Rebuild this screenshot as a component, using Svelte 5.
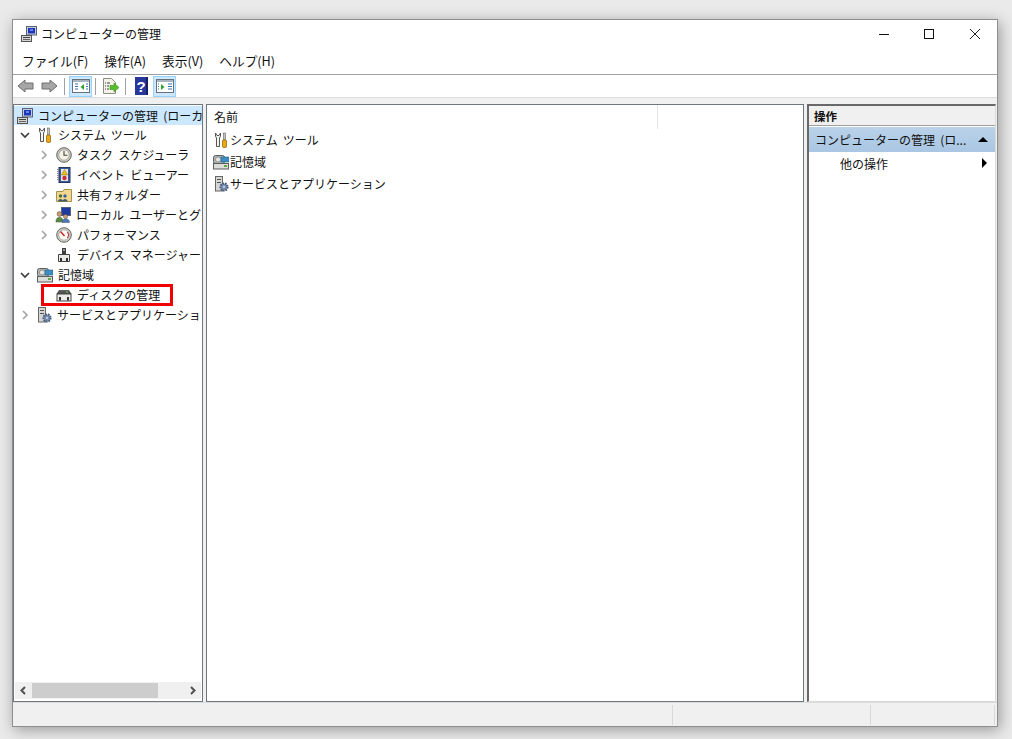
<script>
  const menus = ['ファイル(F)', '操作(A)', '表示(V)', 'ヘルプ(H)'];
  const tree = [
    { label: 'システム ツール', icon: 'tools', depth: 1, arrow: 'down' },
    { label: 'タスク スケジューラ', icon: 'clock', depth: 2, arrow: 'right' },
    { label: 'イベント ビューアー', icon: 'event', depth: 2, arrow: 'right' },
    { label: '共有フォルダー', icon: 'folder', depth: 2, arrow: 'right' },
    { label: 'ローカル ユーザーとグループ', icon: 'users', depth: 2, arrow: 'right' },
    { label: 'パフォーマンス', icon: 'perf', depth: 2, arrow: 'right' },
    { label: 'デバイス マネージャー', icon: 'device', depth: 2, arrow: '' },
    { label: '記憶域', icon: 'storage', depth: 1, arrow: 'down' },
    { label: 'ディスクの管理', icon: 'disk', depth: 2, arrow: '', marked: true },
    { label: 'サービスとアプリケーション', icon: 'services', depth: 1, arrow: 'right' }
  ];
  const list = [
    { label: 'システム ツール', icon: 'tools' },
    { label: '記憶域', icon: 'storage' },
    { label: 'サービスとアプリケーション', icon: 'services' }
  ];
</script>

{#snippet icon(name)}
  <svg class="ico" width="16" height="16" viewBox="0 0 16 16">
    {#if name === 'computer'}
      <rect x="5.500" y=".5" width="10" height="8.500" fill="#c8ccd8" stroke="#56617e"/>
      <rect x="7" y="2" width="7" height="5.500" fill="#1f35b8"/>
      <rect x="9" y="3" width="3" height="2" fill="#5f86ea"/>
      <rect x=".5" y="9.500" width="10" height="6" fill="#d3d3cf" stroke="#555"/>
      <rect x="2" y="11" width="7" height="1" fill="#444"/>
      <rect x="2" y="13" width="7" height="1" fill="#666"/>
    {:else if name === 'tools'}
      <path d="M2.500 1v3.200L3.500 6v8.500h3V6l1-1.800V1L6 3.500H4z" fill="#f4f4f0" stroke="#555"/>
      <rect x="10.500" y="1" width="2" height="7" fill="#c4c4bc" stroke="#666" stroke-width=".6"/>
      <rect x="9.500" y="8" width="4" height="7.500" rx="1" fill="#eca80e" stroke="#8a5a08" stroke-width=".7"/>
    {:else if name === 'clock'}
      <circle cx="8" cy="8" r="7.300" fill="#c9c9c2" stroke="#66665f"/>
      <circle cx="8" cy="8" r="5.200" fill="#f6f3e6" stroke="#8f8f88" stroke-width=".6"/>
      <path d="M8 4v4.300h3.400" fill="none" stroke="#44443c" stroke-width="1.100"/>
    {:else if name === 'event'}
      <rect x="3" y=".5" width="11" height="15" fill="#3a5a9c" stroke="#26375f"/>
      <path d="M2 2v12" stroke="#8a8a8a" stroke-width="2" stroke-dasharray="1 1"/>
      <rect x="5" y="2" width="7" height="12" fill="#e6e6ea"/>
      <path d="M8.500 2.500l3 5.500h-6z" fill="#f0c414" stroke="#8a6a08" stroke-width=".5"/>
      <circle cx="8.500" cy="11" r="2.200" fill="#cc3030"/>
    {:else if name === 'folder'}
      <path d="M.5 4.500V14.500h15V2.500H8L7 4.500z" fill="#f0d890" stroke="#a8924a"/>
      <circle cx="4.500" cy="9" r="1.700" fill="#4d6f34"/>
      <circle cx="9" cy="9" r="1.700" fill="#3e5f9e"/>
      <path d="M2 14.500c0-3.500 5-3.500 5 0zM6.500 14.500c0-3.500 5-3.500 5 0z" fill="#40586c"/>
    {:else if name === 'users'}
      <rect x="6.500" y=".5" width="9" height="8" fill="#1f3aa0" stroke="#56617e"/>
      <circle cx="4.500" cy="7" r="2.400" fill="#c99a70" stroke="#5d4a30" stroke-width=".5"/>
      <path d="M1 14c0-5 7-5 7 0v1H1z" fill="#5a8a44" stroke="#3a5a2c" stroke-width=".5"/>
      <circle cx="10.500" cy="9.500" r="2.100" fill="#c9a080" stroke="#5d4a30" stroke-width=".5"/>
      <path d="M7 15.500c0-5 7.500-5 7.500 0z" fill="#4f78b4" stroke="#304e7c" stroke-width=".5"/>
    {:else if name === 'perf'}
      <circle cx="8" cy="8" r="7.300" fill="#cfcfca" stroke="#66665f"/>
      <circle cx="8" cy="8" r="5.200" fill="#fafaf6" stroke="#8f8f88" stroke-width=".6"/>
      <path d="M4.500 4.500L8.500 9" stroke="#c62828" stroke-width="1.500"/>
      <path d="M11.500 5a5 5 0 0 1 0 6" stroke="#c62828" fill="none"/>
    {:else if name === 'device'}
      <rect x="6" y="1" width="4" height="6" fill="#3c3c3c"/>
      <rect x="7" y="2" width="2" height="2" fill="#9a9a9a"/>
      <path d="M2.500 7.500h11v7h-11z" fill="#e8e8e4" stroke="#444"/>
      <rect x="4" y="11" width="2" height="3" fill="#333"/>
      <rect x="10" y="11" width="2" height="3" fill="#333"/>
    {:else if name === 'storage'}
      <rect x=".5" y="1.500" width="11" height="8" rx="2" fill="#b4b8b4" stroke="#5a5f5f"/>
      <rect x="8" y="3" width="8" height="5" fill="#3c8fc4" stroke="#2b6088" stroke-width=".6"/>
      <circle cx="5" cy="5.500" r="2.600" fill="#e4e4e0" stroke="#666" stroke-width=".6"/>
      <rect x=".5" y="9.500" width="15" height="5.500" fill="#dcdcd8" stroke="#5a5f5f"/>
      <rect x="11" y="11" width="3" height="2" fill="#62a844"/>
    {:else if name === 'disk'}
      <path d="M3 3.500h10l2 3.500H1z" fill="#555" stroke="#333" stroke-width=".6"/>
      <rect x="10" y="4.500" width="2" height="1" fill="#5fd04a"/>
      <rect x="1" y="7" width="14" height="7" fill="#ecece8" stroke="#444"/>
      <rect x="3" y="10" width="2" height="3.500" fill="#333"/>
      <rect x="11" y="10" width="2" height="3.500" fill="#333"/>
    {:else if name === 'services'}
      <rect x="2.500" y=".5" width="7" height="14.500" fill="#d6d6d2" stroke="#666"/>
      <rect x="4" y="3" width="4" height="1" fill="#555"/>
      <rect x="4" y="6" width="4" height="1" fill="#555"/>
      <circle cx="11" cy="11" r="3.600" fill="#7a93b8" stroke="#44587a" stroke-width="2" stroke-dasharray="1.500 1"/>
      <circle cx="11" cy="11" r="1.400" fill="#e8eef6" stroke="#44587a" stroke-width=".5"/>
    {/if}
  </svg>
{/snippet}

{#snippet chevron(dir)}
  <svg class="chev" width="10" height="10" viewBox="0 0 10 10">
    {#if dir === 'down'}
      <path d="M1 3l4 4 4-4" fill="none" stroke="#3c3c3c" stroke-width="1.700"/>
    {:else if dir === 'right'}
      <path d="M3 1l4 4-4 4" fill="none" stroke="#a6a6a6" stroke-width="1.700"/>
    {/if}
  </svg>
{/snippet}

<div class="window">
  <header class="title">
    {@render icon('computer')}
    <span class="title-text">コンピューターの管理</span>
    <div class="caption">
      <svg width="12" height="12" viewBox="0 0 12 12"><path d="M0 6.500h10" stroke="#111"/></svg>
      <svg width="12" height="12" viewBox="0 0 12 12"><rect x=".5" y="1.500" width="9" height="9" fill="none" stroke="#111"/></svg>
      <svg width="12" height="12" viewBox="0 0 12 12"><path d="M1 1l10 10M11 1L1 11" stroke="#222"/></svg>
    </div>
  </header>
  <nav class="menu">
    {#each menus as m}<span>{m}</span>{/each}
  </nav>
  <div class="toolbar">
    <svg class="tb back" width="18" height="16" viewBox="0 0 18 16"><path d="M1 8l7-6v3h8v6H8v3z" fill="#a6a6a6" stroke="#6e6e6e"/></svg>
    <svg class="tb fwd" width="18" height="16" viewBox="0 0 18 16"><path d="M17 8l-7-6v3H2v6h8v3z" fill="#a6a6a6" stroke="#6e6e6e"/></svg>
    <i class="sep s-a"></i>
    <div class="tbtn on">
      <svg width="18" height="16" viewBox="0 0 18 16"><rect x=".5" y="1.500" width="17" height="13" fill="#fff" stroke="#68707a"/><rect x="1" y="2" width="16" height="2" fill="#a9b4c0"/><path d="M3 6h3M3 8.500h3M3 11h3M14 6h2M14 8.500h2M14 11h2" stroke="#3b6fb5"/><path d="M12 6v6L8.500 9z" fill="#2da52d"/></svg>
    </div>
    <i class="sep s-b"></i>
    <svg class="tb doc" width="18" height="18" viewBox="0 0 18 18"><path d="M1.500 1.500h8l4 4v11h-12z" fill="#f2f2e6" stroke="#8c8c80"/><path d="M3 6h1M5 6h3M3 9h1M5 9h2M3 12h1M5 12h2" stroke="#444"/><path d="M8 8.500h4V6l5 4.500L12 15v-2.500H8z" fill="#56c02c" stroke="#3f8f20" stroke-width=".6"/></svg>
    <i class="sep s-c"></i>
    <svg class="tb help" width="13" height="18" viewBox="0 0 13 18"><rect width="13" height="18" fill="#27379a"/><rect x="11" width="2" height="18" fill="#16206a"/><text x="6" y="14.500" font-family="Liberation Sans" font-size="15" font-weight="700" text-anchor="middle" fill="#fff">?</text></svg>
    <div class="tbtn on last">
      <svg width="18" height="16" viewBox="0 0 18 16"><rect x=".5" y="1.500" width="17" height="13" fill="#fff" stroke="#68707a"/><rect x="1" y="2" width="16" height="2" fill="#a9b4c0"/><path d="M12 6h4M12 8.500h4M12 11h4M2 6h1M2 8.500h1M2 11h1" stroke="#3b6fb5"/><path d="M5 6v6l3.500-3z" fill="#2da52d"/></svg>
    </div>
  </div>

  <main class="panes">
    <section class="treepane">
      <div class="treescroll">
        <div class="root">
          {@render icon('computer')}
          <span class="clip">コンピューターの管理 (ローカル)</span>
        </div>
        {#each tree as n}
          <div class="node" class:d2={n.depth === 2}>
            <span class="arrow">{@render chevron(n.arrow)}</span>
            {@render icon(n.icon)}
            <span class="lbl">{n.label}</span>
            {#if n.marked}<i class="mark"></i>{/if}
          </div>
        {/each}
      </div>
      <div class="hscroll">
        <svg width="17" height="15" viewBox="0 0 17 15"><path d="M10 4L6.500 7.500 10 11" fill="none" stroke="#505050" stroke-width="2"/></svg>
        <div class="track"><div class="thumb"></div></div>
        <svg width="17" height="15" viewBox="0 0 17 15"><path d="M7 4l3.500 3.500L7 11" fill="none" stroke="#505050" stroke-width="2"/></svg>
      </div>
    </section>

    <section class="listpane">
      <div class="colhead"><span class="col">名前</span></div>
      {#each list as r}
        <div class="row">{@render icon(r.icon)}<span>{r.label}</span></div>
      {/each}
    </section>

    <section class="actions">
      <div class="acthead">操作</div>
      <div class="actsel"><span>コンピューターの管理 (ロ...</span><i class="up"></i></div>
      <div class="actitem"><span>他の操作</span><i class="rt"></i></div>
    </section>
  </main>

  <footer class="status"><span></span><span class="s2"></span><span class="s3"></span></footer>
</div>

<style>
  :global(body) {
    margin: 0;
    background: #eaeaea;
    height: 739px;
    overflow: hidden;
  }
  .window {
    box-sizing: border-box;
    width: 986px;
    height: 708px;
    margin: 19px 0 0 12px;
    background: #fff;
    border: 1px solid #8e8e8e;
    box-shadow: 2px 3px 14px rgba(0, 0, 0, 0.35);
    display: flex;
    flex-direction: column;
    font-family: "Noto Sans CJK JP", "Liberation Sans", sans-serif;
    font-size: 12px;
    word-spacing: 2.500px;
    color: #111;
  }
  .ico { flex: none; display: block; }
  .title {
    height: 28px;
    display: flex;
    align-items: center;
    padding-left: 8px;
    gap: 4px;
    flex: none;
  }
  .title-text { line-height: 16px; }
  .caption {
    margin-left: auto;
    display: flex;
    gap: 33px;
    padding-right: 16px;
  }
  .caption svg { display: block; }
  .menu {
    height: 27px;
    box-sizing: border-box;
    flex: none;
    display: flex;
    align-items: center;
    gap: 16px;
    padding-left: 9px;
    padding-bottom: 1px;
    border-bottom: 1px solid #a0a0a0;
    font-size: 12.700px;
  }
  .toolbar {
    height: 23px;
    box-sizing: border-box;
    flex: none;
    display: flex;
    align-items: center;
    padding-left: 4px;
    border-bottom: 1px solid #dcdcdc;
  }
  .tb { display: block; }
  .back { margin-right: 5px; }
  .sep { width: 1px; height: 17px; background: #a0a0a0; }
  .s-a { margin: 0 4px 0 6px; }
  .s-b { margin: 0 6px 0 3px; }
  .s-c { margin: 0 9px 0 5px; }
  .tbtn {
    box-sizing: border-box;
    width: 23px;
    height: 21px;
    display: flex;
    align-items: center;
    justify-content: center;
  }
  .tbtn.on { background: #cce8ff; border: 1px solid #99d1ff; }
  .tbtn svg { display: block; }
  .help { margin-right: 5px; }
  .panes {
    flex: 1;
    min-height: 0;
    display: flex;
    background: #f0f0f0;
    padding: 6px 0 0 0;
    gap: 3px;
  }
  .treepane {
    box-sizing: border-box;
    width: 190px;
    background: #fff;
    border: 1px solid #6d7780;
    display: flex;
    flex-direction: column;
  }
  .treescroll { flex: 1; min-height: 0; overflow: hidden; padding-top: 1px; }
  .root {
    height: 19px;
    display: flex;
    align-items: center;
    gap: 5px;
    padding-left: 3px;
    background: #cce8ff;
    white-space: nowrap;
    overflow: hidden;
  }
  .clip { line-height: 16px; }
  .node {
    height: 20px;
    display: flex;
    align-items: center;
    white-space: nowrap;
    padding-left: 6px;
    position: relative;
  }
  .node.d2 { padding-left: 25px; }
  .arrow { width: 11px; display: flex; align-items: center; }
  .node .ico { margin: 0 5px 0 6px; }
  .chev { display: block; }
  .lbl { line-height: 16px; }
  .mark {
    position: absolute;
    left: 27px;
    top: -1px;
    width: 126px;
    height: 16px;
    border: 3px solid #f00000;
    pointer-events: none;
  }
  .hscroll {
    height: 17px;
    flex: none;
    display: flex;
    align-items: center;
    background: #f0f0f0;
    margin: 0 1px 2px;
  }
  .hscroll svg { display: block; flex: none; }
  .track { flex: 1; height: 15px; }
  .thumb { width: 126px; height: 15px; background: #cdcdcd; }
  .listpane {
    box-sizing: border-box;
    width: 598px;
    background: #fff;
    border: 1px solid #6d7780;
  }
  .colhead { height: 24px; display: flex; align-items: flex-start; padding-left: 7px; }
  .col {
    width: 443px;
    height: 24px;
    line-height: 23px;
    border-right: 1px solid #e5e5e5;
  }
  .row {
    height: 22px;
    display: flex;
    align-items: center;
    gap: 1px;
    padding-left: 6px;
  }
  .row span { line-height: 16px; }
  .actions {
    box-sizing: border-box;
    width: 189px;
    background: #fff;
    border: 1px solid #dadada;
    border-left: 2px solid #696969;
    border-top: 2px solid #696969;
  }
  .acthead {
    height: 19px;
    background: #f0f0f0;
    border-bottom: 1px solid #a0a0a0;
    padding-left: 5px;
    line-height: 21px;
    font-size: 11.500px;
    font-weight: 700;
  }
  .actsel {
    height: 25px;
    margin-top: 1px;
    background: linear-gradient(#bad2ea, #a9c6e2);
    display: flex;
    align-items: center;
    padding: 0 7px 0 6px;
    justify-content: space-between;
  }
  .up {
    width: 0;
    height: 0;
    border-left: 5px solid transparent;
    border-right: 5px solid transparent;
    border-bottom: 5px solid #000;
  }
  .actitem {
    height: 22px;
    display: flex;
    align-items: center;
    justify-content: space-between;
    padding: 0 8px 0 31px;
  }
  .rt {
    width: 0;
    height: 0;
    border-top: 5px solid transparent;
    border-bottom: 5px solid transparent;
    border-left: 5px solid #000;
  }
  .status {
    height: 24px;
    flex: none;
    box-sizing: border-box;
    display: flex;
    background: #f0f0f0;
    border-top: 1px solid #dcdcdc;
    padding: 2px 2px 1px 0;
  }
  .status span { display: block; }
  .status span:first-child { width: 659px; }
  .s2 { width: 197px; border-left: 1px solid #d8d8d8; }
  .s3 { flex: 1; border-left: 1px solid #d8d8d8; border-right: 1px solid #d8d8d8; }
</style>
